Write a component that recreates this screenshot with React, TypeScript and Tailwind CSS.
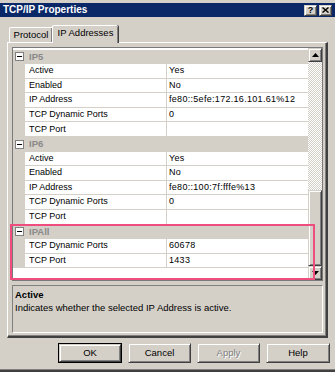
import React from 'react';

type Prop = [string, string];

interface Group {
  name: string;
  props: Prop[];
}

const groups: Group[] = [
  {
    name: 'IP5',
    props: [
      ['Active', 'Yes'],
      ['Enabled', 'No'],
      ['IP Address', 'fe80::5efe:172.16.101.61%12'],
      ['TCP Dynamic Ports', '0'],
      ['TCP Port', ''],
    ],
  },
  {
    name: 'IP6',
    props: [
      ['Active', 'Yes'],
      ['Enabled', 'No'],
      ['IP Address', 'fe80::100:7f:fffe%13'],
      ['TCP Dynamic Ports', '0'],
      ['TCP Port', ''],
    ],
  },
  {
    name: 'IPAll',
    props: [
      ['TCP Dynamic Ports', '60678'],
      ['TCP Port', '1433'],
    ],
  },
];

const bevel =
  'bg-[#d4d0c8] border border-t-[#d4d0c8] border-l-[#d4d0c8] border-b-[#404040] border-r-[#404040] shadow-[inset_1px_1px_#ffffff,inset_-1px_-1px_#808080]';

function Arrow({ up }: { up?: boolean }) {
  return (
    <svg width="7" height="4" viewBox="0 0 7 4">
      <polygon points={up ? '3.5,0 7,4 0,4' : '0,0 7,0 3.5,4'} fill="#000" />
    </svg>
  );
}

function CategoryRow({ name }: { name: string }) {
  return (
    <div className="flex h-[14.6px] items-center bg-[#d4d0c8]">
      <div className="flex w-[12px] justify-end pr-px">
        <div className="flex h-[9px] w-[9px] items-center justify-center border border-[#808080] bg-white">
          <div className="h-px w-[5px] bg-black" />
        </div>
      </div>
      <span className="pl-[4px] text-[9.5px] font-bold text-[#8a8a8a]">{name}</span>
    </div>
  );
}

function PropRow({ label, value }: { label: string; value: string }) {
  return (
    <div className="flex h-[14.6px]">
      <div className="w-[12px] bg-[#d4d0c8]" />
      <div className="flex w-[142px] items-center border-r border-b border-[#d4d0c8] bg-white pl-[4px] text-[9px] text-black">
        {label}
      </div>
      <div className="flex flex-1 items-center border-b border-[#d4d0c8] bg-white pl-[2px] text-[9px] tracking-[0.3px] text-black">
        {value}
      </div>
    </div>
  );
}

export default function App() {
  return (
    <div className="relative flex h-[372px] w-[335px] flex-col overflow-hidden bg-[#d4d0c8] font-['Liberation_Sans',Arial,sans-serif] text-black">
      {/* title bar */}
      <div className="mt-[3px] flex h-[14px] items-center justify-between bg-[#0a2868] pl-[3px] pr-[3px]">
        <span className="text-[10px] font-bold leading-none text-white">TCP/IP Properties</span>
        <div className="flex gap-[2px]">
          <div className={`${bevel} flex h-[11px] w-[13px] items-center justify-center text-[9px] font-bold leading-none`}>
            ?
          </div>
          <div className={`${bevel} flex h-[11px] w-[13px] items-center justify-center`}>
            <svg width="7" height="6" viewBox="0 0 7 6">
              <path d="M0.5 0.5 L6.5 5.5 M6.5 0.5 L0.5 5.5" stroke="#000" strokeWidth="1.4" />
            </svg>
          </div>
        </div>
      </div>

      {/* tabs */}
      <div className="mt-[8px] flex h-[17px] items-end pl-[9px]">
        <div className="flex h-[15px] w-[43px] items-center justify-center rounded-tl-[2px] border-t border-l border-white shadow-[inset_-1px_0_#808080] text-[9.5px]">
          Protocol
        </div>
        <div className="relative z-10 -mb-px flex h-[18px] w-[66px] items-center justify-center rounded-t-[2px] border-t border-l border-white bg-[#d4d0c8] pb-[2px] shadow-[inset_-1px_0_#808080,1px_0_#404040] text-[9.5px]">
          IP Addresses
        </div>
      </div>

      {/* tab panel */}
      <div className="ml-[7px] flex h-[296px] w-[321px] flex-col border-t border-l border-white border-r-2 border-b-2 border-r-[#404040] border-b-[#404040] pt-[4px] pl-[4px] pr-[3px] pb-[3px] shadow-[inset_-1px_-1px_#808080]">
        {/* property grid */}
        <div className="flex h-[234px] w-[311px] border border-[#7a7a7a] bg-white">
          <div className="flex flex-1 flex-col overflow-hidden pt-[1.5px]">
            {groups.map((g) => (
              <React.Fragment key={g.name}>
                <CategoryRow name={g.name} />
                {g.props.map(([label, value]) => (
                  <PropRow key={g.name + label} label={label} value={value} />
                ))}
              </React.Fragment>
            ))}
          </div>
          {/* scrollbar */}
          <div className="flex w-[14px] flex-col">
            <div className={`${bevel} flex h-[14px] items-center justify-center`}>
              <Arrow up />
            </div>
            <div className="flex flex-1 flex-col justify-end bg-[repeating-conic-gradient(#d4d0c8_0%_25%,#ffffff_0%_50%)] bg-[length:2px_2px]">
              <div className={`${bevel} h-[76px]`} />
            </div>
            <div className={`${bevel} flex h-[14px] items-center justify-center`}>
              <Arrow />
            </div>
          </div>
        </div>

        {/* description */}
        <div className="mt-[4px] h-[48px] w-[311px] border border-t-[#808080] border-l-[#808080] border-b-white border-r-white px-[2px] pt-[2px]">
          <div className="text-[9.5px] font-bold leading-[13px]">Active</div>
          <div className="text-[9.5px] leading-[13px]">Indicates whether the selected IP Address is active.</div>
        </div>
      </div>

      {/* buttons */}
      <div className="mt-[5px] flex justify-end gap-[6px] pr-[5px]">
        <div className="h-[20px] w-[64px] border border-black">
          <div className={`${bevel} flex h-full w-full items-center justify-center text-[9.5px]`}>OK</div>
        </div>
        <div className={`${bevel} flex h-[20px] w-[63px] items-center justify-center text-[9.5px]`}>Cancel</div>
        <div className={`${bevel} flex h-[20px] w-[63px] items-center justify-center text-[9.5px] text-[#808080] [text-shadow:1px_1px_#ffffff]`}>
          Apply
        </div>
        <div className={`${bevel} flex h-[20px] w-[64px] items-center justify-center text-[9.5px]`}>Help</div>
      </div>

      <div className="mt-auto h-[3px] border-t border-[#808080] bg-[#404040]" />

      {/* highlight annotation */}
      <div className="absolute left-[10px] top-[224px] h-[56px] w-[305px] border-2 border-[#ee4d7d]" />
    </div>
  );
}
